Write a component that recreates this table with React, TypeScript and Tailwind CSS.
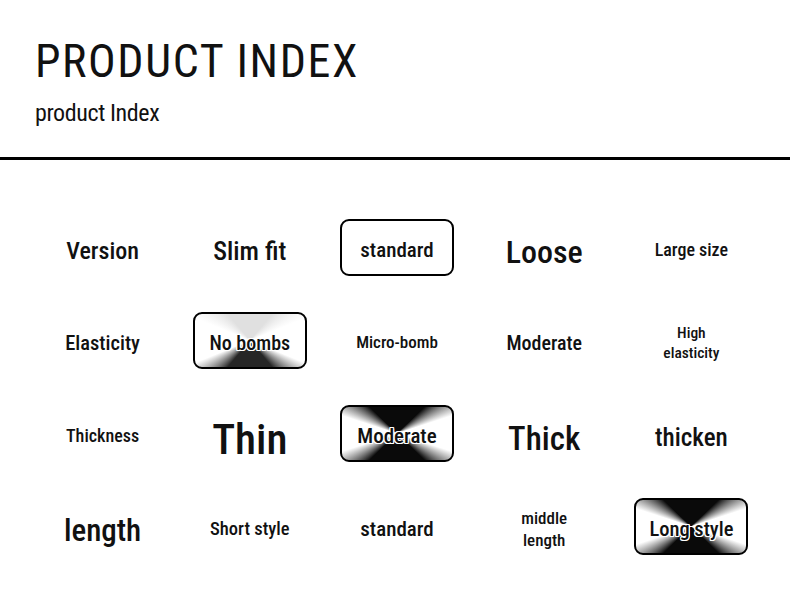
import React from 'react';

type Cell = {
  text: string;
  size: string;
  box?: 'plain' | 'light' | 'dark';
  lines?: string[];
};

const rows: Cell[][] = [
  [
    { text: 'Version', size: 'text-[24px]' },
    { text: 'Slim fit', size: 'text-[26px]' },
    { text: 'standard', size: 'text-[21px]', box: 'plain' },
    { text: 'Loose', size: 'text-[32px]' },
    { text: 'Large size', size: 'text-[18px]' },
  ],
  [
    { text: 'Elasticity', size: 'text-[20.5px]' },
    { text: 'No bombs', size: 'text-[20px]', box: 'light' },
    { text: 'Micro-bomb', size: 'text-[17px]' },
    { text: 'Moderate', size: 'text-[20px]' },
    { text: '', size: 'text-[15.5px]', lines: ['High', 'elasticity'] },
  ],
  [
    { text: 'Thickness', size: 'text-[18px]' },
    { text: 'Thin', size: 'text-[43px]' },
    { text: 'Moderate', size: 'text-[21px]', box: 'dark' },
    { text: 'Thick', size: 'text-[33px]' },
    { text: 'thicken', size: 'text-[25px]' },
  ],
  [
    { text: 'length', size: 'text-[31px]' },
    { text: 'Short style', size: 'text-[18.5px]' },
    { text: 'standard', size: 'text-[21px]' },
    { text: '', size: 'text-[17px]', lines: ['middle', 'length'] },
    { text: 'Long style', size: 'text-[20.5px]', box: 'dark' },
  ],
];

function CellView({ cell }: { cell: Cell }) {
  const label = cell.lines ? (
    <span className="flex flex-col items-center pt-[0.28em] leading-[1.3]">
      {cell.lines.map((l) => (
        <span key={l}>{l}</span>
      ))}
    </span>
  ) : (
    <span className="pt-[0.28em] leading-none">{cell.text}</span>
  );

  if (!cell.box) {
    return <div className={`flex items-center justify-center font-[470] ${cell.size}`}>{label}</div>;
  }

  const bg =
    cell.box === 'plain'
      ? 'bg-white'
      : cell.box === 'light'
        ? 'bg-[conic-gradient(#e0e0e0_0deg_40deg,#fff_68deg_112deg,#262626_140deg_220deg,#fff_248deg_292deg,#e0e0e0_320deg_360deg)]'
        : 'bg-[conic-gradient(#0a0a0a_0deg_46deg,#fff_72deg_108deg,#0a0a0a_134deg_226deg,#fff_252deg_288deg,#0a0a0a_314deg_360deg)]';

  const halo =
    cell.box === 'plain'
      ? ''
      : '[text-shadow:1px_0_#fff,-1px_0_#fff,0_1px_#fff,0_-1px_#fff,1px_1px_#fff,-1px_-1px_#fff,1px_-1px_#fff,-1px_1px_#fff]';

  return (
    <div className="flex items-center justify-center">
      <div
        className={`flex h-[57px] w-[114px] items-center justify-center rounded-[9px] border-2 border-black font-[470] ${bg} ${cell.size} ${halo}`}
      >
        {label}
      </div>
    </div>
  );
}

export default function App() {
  return (
    <div className="h-[597px] w-[790px] overflow-hidden bg-white text-[#111] font-['Roboto',sans-serif] [font-stretch:75%]">
      {/* Header */}
      <div className="px-[35px] pt-[38px] pb-[32px]">
        <h1 className="text-[46px] leading-none tracking-[1.6px]">PRODUCT INDEX</h1>
        <p className="mt-[17px] text-[24px] leading-none tracking-[-0.4px]">product Index</p>
      </div>
      <div className="h-[3px] w-full bg-black" />

      {/* Index grid */}
      <div className="grid grid-cols-5 pt-[41px] pl-[29px] pr-[25px]">
        {rows.map((row, i) =>
          row.map((cell, j) => (
            <div key={`${i}-${j}`} className="flex h-[93px] items-center justify-center">
              <CellView cell={cell} />
            </div>
          )),
        )}
      </div>
    </div>
  );
}
